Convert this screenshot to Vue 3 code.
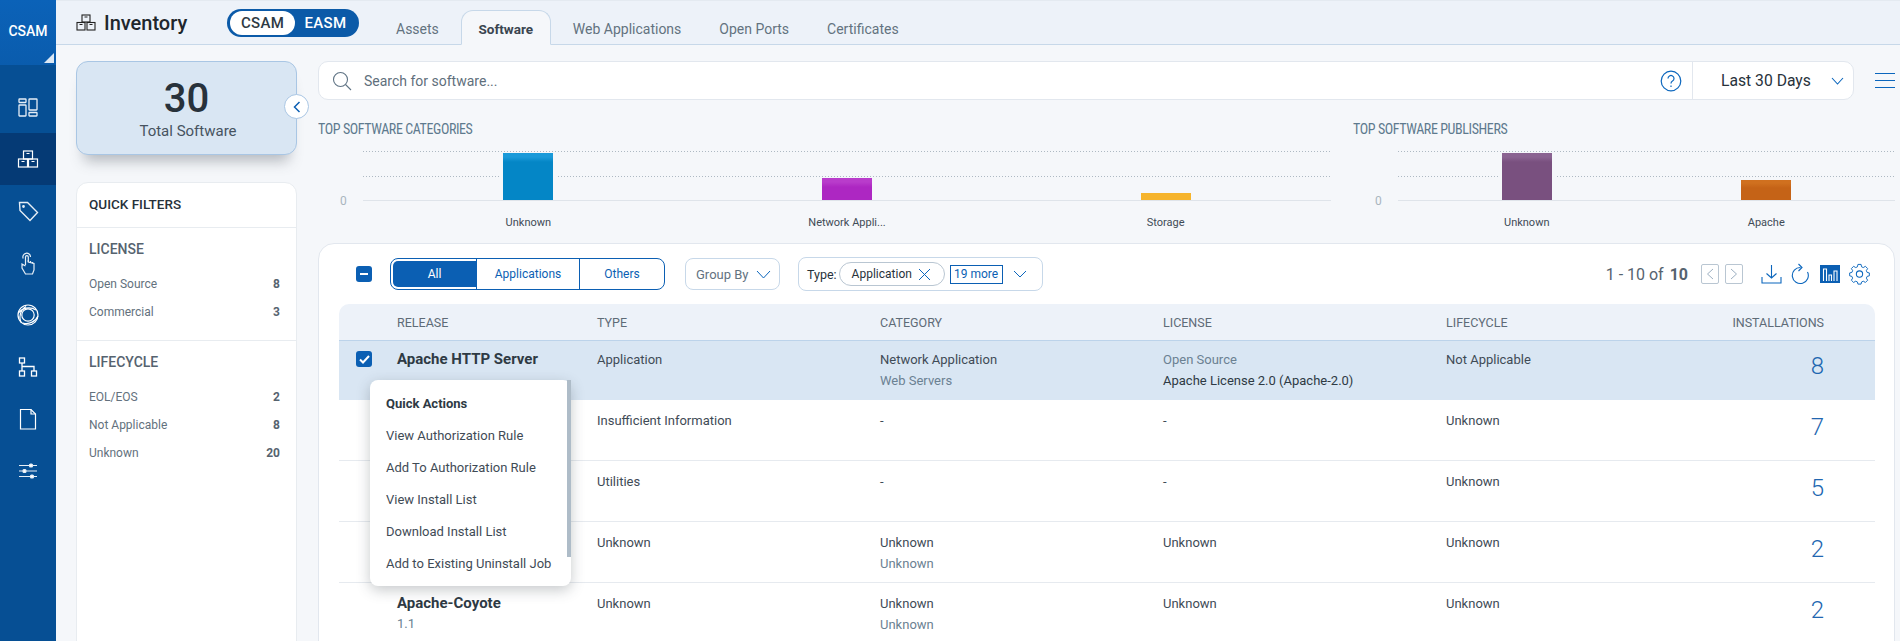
<template>
  <div class="app">
    <!-- left nav -->
    <aside class="sidebar">
      <div class="logo">CSAM<span class="logo-corner"></span></div>
      <nav class="nav">
        <div class="nav-item">
          <svg width="20" height="19" viewBox="0 0 20 19" fill="none" stroke="#e6eef6" stroke-width="1.3">
            <rect x="1" y="1" width="7" height="3.5" rx=".5" /><rect x="1" y="7" width="7" height="11" rx=".5" />
            <rect x="11" y="1" width="8" height="11" rx=".5" /><rect x="11" y="14.5" width="8" height="3.5" rx=".5" />
          </svg>
        </div>
        <div class="nav-item active">
          <svg width="22" height="18" viewBox="0 0 22 18" fill="none" stroke="#fff" stroke-width="1.2">
            <rect x="6.5" y="1" width="9" height="8" /><rect x="1.5" y="9" width="9" height="8" /><rect x="11.5" y="9" width="9" height="8" />
            <path d="M9.5 3.5h3M4.5 11.5h3M14.5 11.5h3" />
          </svg>
        </div>
        <div class="nav-item">
          <svg width="21" height="21" viewBox="0 0 21 21" fill="none" stroke="#e6eef6" stroke-width="1.4">
            <path d="M1.5 1.5h8l10 10-7.5 8-10-10z" /><circle cx="5.5" cy="5.5" r=".7" />
          </svg>
        </div>
        <div class="nav-item">
          <svg width="14" height="23" viewBox="0 0 14 23" fill="none" stroke="#e6eef6" stroke-width="1.2">
            <path d="M4.5 13V5a1.4 1.4 0 0 1 2.8 0v5l5.700 1.500V18l-1.500 4H4.500L1 16v-4l3.500 2" />
            <path d="M7.300 10V8M9.500 11V9M11.500 11.500V10" />
            <path d="M2.200 6.500A3.800 3.800 0 1 1 9.500 5" />
          </svg>
        </div>
        <div class="nav-item">
          <svg width="22" height="22" viewBox="0 0 22 22" fill="none" stroke="#fff" stroke-width="1.2">
            <circle cx="11" cy="11" r="10" /><circle cx="11" cy="11" r="6.2" />
            <path d="M1.500 9C5 4 13 2 19 6M4.500 19C1.500 14 3 6 9 2.500M21 12c-2 5-9 9-15 7" />
          </svg>
        </div>
        <div class="nav-item">
          <svg width="20" height="20" viewBox="0 0 20 20" fill="none" stroke="#fff" stroke-width="1.3">
            <rect x="1.5" y="1" width="5" height="5" /><rect x="1.5" y="14" width="5" height="5" /><rect x="13.5" y="14" width="5" height="5" />
            <path d="M4 6v8M4 9.500h12V14" />
          </svg>
        </div>
        <div class="nav-item">
          <svg width="18" height="22" viewBox="0 0 18 22" fill="none" stroke="#fff" stroke-width="1.2">
            <path d="M1.500 1.500h10.500l4.500 4.500v15H1.500z" /><path d="M12 1.500V6h4.500" />
          </svg>
        </div>
        <div class="nav-item">
          <svg width="20" height="16" viewBox="0 0 20 16" fill="none" stroke="#e6eef6" stroke-width="1.1">
            <path d="M1 2.500h18M1 8h18M1 13.500h18" />
            <rect x="11.5" y="1" width="3" height="3" rx="1" fill="#fff" /><rect x="5" y="6.5" width="3" height="3" rx="1" fill="#fff" /><rect x="12.5" y="12" width="3" height="3" rx="1" fill="#fff" />
          </svg>
        </div>
      </nav>
    </aside>

    <div class="main">
      <header class="topbar">
        <div class="page-title">
          <svg width="20" height="17" viewBox="0 0 20 17" fill="none" stroke="#222" stroke-width="1.1">
            <rect x="6" y="1" width="8" height="7" /><rect x="1" y="8.5" width="8" height="7.5" /><rect x="11" y="8.5" width="8" height="7.5" />
            <path d="M8.500 3h3M3.500 10.500h3M13.500 10.500h3" />
          </svg>
          <span>Inventory</span>
        </div>
        <div class="scope-toggle">
          <span class="scope on">CSAM</span>
          <span class="scope">EASM</span>
        </div>
        <div class="tabs">
          <div v-for="tab in tabs" :key="tab" class="tab" :class="{ selected: tab === 'Software' }">{{ tab }}</div>
        </div>
      </header>

      <div class="content">
        <!-- left column -->
        <div class="left-col">
          <div class="total-card">
            <div class="total-num">30</div>
            <div class="total-label">Total Software</div>
            <button class="collapse-btn">
              <svg width="8" height="12" viewBox="0 0 8 12" fill="none" stroke="#0b5fb3" stroke-width="1.5"><path d="M6.500 1L1.500 6l5 5" /></svg>
            </button>
          </div>
          <div class="filters">
            <div class="filters-title">QUICK FILTERS</div>
            <div v-for="group in filterGroups" :key="group.name" class="filter-group">
              <div class="filter-name">{{ group.name }}</div>
              <div v-for="item in group.items" :key="item.label" class="filter-row">
                <span>{{ item.label }}</span><b>{{ item.count }}</b>
              </div>
            </div>
          </div>
        </div>

        <!-- right column -->
        <div class="right-col">
          <div class="search-row">
            <div class="search-box">
              <svg class="search-icon" width="20" height="20" viewBox="0 0 20 20" fill="none" stroke="#5f7384" stroke-width="1.1">
                <circle cx="8.5" cy="8.5" r="7" /><path d="M13.500 13.500l5.500 5.500" />
              </svg>
              <span class="search-text">Search for software...</span>
              <svg class="help-icon" width="22" height="22" viewBox="0 0 22 22" fill="none" stroke="#0b66bd" stroke-width="1.2">
                <circle cx="11" cy="11" r="9.8" />
                <path d="M8 8.500a3 3 0 1 1 4.500 2.600c-1 .6-1.500 1.100-1.500 2.400" /><path d="M11 15.500v1.500" />
              </svg>
              <div class="range">
                <span>Last 30 Days</span>
                <svg width="13" height="8" viewBox="0 0 13 8" fill="none" stroke="#0b66bd" stroke-width="1.1"><path d="M1 1l5.500 6L12 1" /></svg>
              </div>
            </div>
            <div class="hamburger"><i></i><i></i><i></i></div>
          </div>

          <div class="charts">
            <div v-for="chart in charts" :key="chart.title" class="chart" :class="chart.cls">
              <div class="chart-title">{{ chart.title }}</div>
              <div class="chart-body">
                <span class="zero">0</span>
                <div class="plot-wrap">
                  <div class="plot">
                    <div v-for="bar in chart.bars" :key="bar.label" class="bar-slot">
                      <div class="bar" :style="{ height: bar.h + 'px', background: bar.color }"></div>
                    </div>
                  </div>
                  <div class="bar-labels">
                    <span v-for="bar in chart.bars" :key="bar.label">{{ bar.label }}</span>
                  </div>
                </div>
              </div>
            </div>
          </div>

          <section class="panel">
            <div class="toolbar">
              <span class="check minus"><i></i></span>
              <div class="segment">
                <span class="seg on">All</span>
                <span class="seg apps">Applications</span>
                <span class="seg others">Others</span>
              </div>
              <div class="group-by">
                <span>Group By</span>
                <svg width="15" height="9" viewBox="0 0 15 9" fill="none" stroke="#0b66bd" stroke-width="1"><path d="M1 1l6.500 7L14 1" /></svg>
              </div>
              <div class="type-filter">
                <span class="type-label">Type:</span>
                <span class="chip">Application
                  <svg width="13" height="13" viewBox="0 0 13 13" fill="none" stroke="#0b66bd" stroke-width="1"><path d="M1 1l11 11M12 1L1 12" /></svg>
                </span>
                <span class="more">19 more</span>
                <svg class="type-caret" width="14" height="8" viewBox="0 0 14 8" fill="none" stroke="#0b66bd" stroke-width="1"><path d="M1 1l6 6 6-6" /></svg>
              </div>
              <div class="pager">
                <span class="count">1 - 10 of <b>10</b></span>
                <span class="page-btn"><svg width="8" height="12" viewBox="0 0 8 12" fill="none" stroke="#9db0c2" stroke-width="1"><path d="M7 1L1.500 6 7 11" /></svg></span>
                <span class="page-btn"><svg width="8" height="12" viewBox="0 0 8 12" fill="none" stroke="#9db0c2" stroke-width="1"><path d="M1 1l5.500 5L1 11" /></svg></span>
                <svg class="tool first" width="21" height="20" viewBox="0 0 21 20" fill="none" stroke="#0b66bd" stroke-width="1.1">
                  <path d="M10.500 1v13M5.500 9.500l5 4.500 5-4.500M1 13v6h19v-6" />
                </svg>
                <svg class="tool" width="18" height="22" viewBox="0 0 18 22" fill="none" stroke="#0b66bd" stroke-width="1.1">
                  <path d="M9.500 4.500A8 8 0 1 0 16.500 9" /><path d="M7.500 1l3.500 3.500L7.500 8" />
                </svg>
                <span class="chart-toggle">
                  <svg width="16" height="14" viewBox="0 0 16 14" fill="none" stroke="#fff" stroke-width="1.1"><path d="M1.500 14V2h3v12M7 14V8h2.500v6M12 14V4h3v10" /></svg>
                </span>
                <svg class="tool" width="21" height="22" viewBox="0 0 24 24" fill="none" stroke="#0b66bd" stroke-width="1.2">
                  <circle cx="12" cy="12" r="3.6" />
                  <path d="M10 1.500h4l.6 3 2.200 1 2.700-1.600 2.800 2.900-1.600 2.600 1 2.300 2.800.6v3.700l-2.800.7-1 2.200 1.600 2.700-2.800 2.800-2.700-1.600-2.200 1-.6 2.700h-4l-.6-2.700-2.200-1-2.700 1.600-2.800-2.800 1.600-2.700-1-2.200-2.800-.7v-3.700l2.800-.6 1-2.300-1.600-2.600 2.800-2.900 2.700 1.600 2.200-1z" transform="translate(1.200 -.3) scale(.9)" />
                </svg>
              </div>
            </div>

            <div class="grid">
              <div class="grid-head">
                <span></span><span>RELEASE</span><span>TYPE</span><span>CATEGORY</span><span>LICENSE</span><span>LIFECYCLE</span>
                <span class="num-head">INSTALLATIONS</span>
              </div>
              <div v-for="(row, i) in rows" :key="i" class="grid-row" :class="{ picked: i === 0 }">
                <div><span v-if="i === 0" class="check">
                  <svg width="11" height="9" viewBox="0 0 11 9" fill="none" stroke="#fff" stroke-width="2"><path d="M1 4.500L4 7.500 10 1" /></svg>
                </span></div>
                <div>
                  <div class="release">{{ row.release }}</div>
                  <div class="sub">{{ row.version }}</div>
                </div>
                <div>{{ row.type }}</div>
                <div>
                  <div>{{ row.category }}</div>
                  <div class="sub">{{ row.subCategory }}</div>
                </div>
                <div>
                  <div :class="{ muted: row.licenseName }">{{ row.license }}</div>
                  <div class="second">{{ row.licenseName }}</div>
                </div>
                <div>{{ row.lifecycle }}</div>
                <div class="installs">{{ row.installs }}</div>
              </div>
            </div>

            <!-- row actions popup -->
            <div class="quick-menu">
              <div class="menu-title">Quick Actions</div>
              <div v-for="action in actions" :key="action" class="menu-item">{{ action }}</div>
              <div class="menu-scroll"></div>
            </div>
          </section>
        </div>
      </div>
    </div>
  </div>
</template>

<script setup>
const tabs = ['Assets', 'Software', 'Web Applications', 'Open Ports', 'Certificates']

const filterGroups = [
  {
    name: 'LICENSE',
    items: [
      { label: 'Open Source', count: 8 },
      { label: 'Commercial', count: 3 },
    ],
  },
  {
    name: 'LIFECYCLE',
    items: [
      { label: 'EOL/EOS', count: 2 },
      { label: 'Not Applicable', count: 8 },
      { label: 'Unknown', count: 20 },
    ],
  },
]

const charts = [
  {
    title: 'TOP SOFTWARE CATEGORIES',
    cls: 'categories',
    bars: [
      { label: 'Unknown', h: 47, color: 'linear-gradient(#1a9ad9 0 4px, #0486c6 9px)' },
      { label: 'Network Appli...', h: 22, color: 'linear-gradient(#b93ccb 0 4px, #ad27c2 9px)' },
      { label: 'Storage', h: 7, color: '#f6b42c' },
    ],
  },
  {
    title: 'TOP SOFTWARE PUBLISHERS',
    cls: 'publishers',
    bars: [
      { label: 'Unknown', h: 47, color: 'linear-gradient(#8a6391 0 4px, #79507f 9px)' },
      { label: 'Apache', h: 20, color: 'linear-gradient(#d0701f 0 3px, #c56317 8px)' },
    ],
  },
]

const rows = [
  { release: 'Apache HTTP Server', type: 'Application', category: 'Network Application', subCategory: 'Web Servers', license: 'Open Source', licenseName: 'Apache License 2.0 (Apache-2.0)', lifecycle: 'Not Applicable', installs: 8 },
  { type: 'Insufficient Information', category: '-', license: '-', lifecycle: 'Unknown', installs: 7 },
  { type: 'Utilities', category: '-', license: '-', lifecycle: 'Unknown', installs: 5 },
  { type: 'Unknown', category: 'Unknown', subCategory: 'Unknown', license: 'Unknown', lifecycle: 'Unknown', installs: 2 },
  { release: 'Apache-Coyote', version: '1.1', type: 'Unknown', category: 'Unknown', subCategory: 'Unknown', license: 'Unknown', lifecycle: 'Unknown', installs: 2 },
]

const actions = [
  'View Authorization Rule',
  'Add To Authorization Rule',
  'View Install List',
  'Download Install List',
  'Add to Existing Uninstall Job',
]
</script>

<style>
html,
body {
  margin: 0;
  overflow: hidden;
}
</style>

<style scoped>
.app {
  display: flex;
  width: 1900px;
  height: 641px;
  overflow: hidden;
  background: #f5f7fa;
  font-family: Roboto, 'Liberation Sans', sans-serif;
  color: #2e3a44;
}

/* ===== sidebar ===== */
.sidebar {
  width: 56px;
  flex-shrink: 0;
  background: #064f94;
}
.logo {
  position: relative;
  height: 65px;
  padding-top: 23px;
  box-sizing: border-box;
  text-align: center;
  color: #fff;
  font-size: 14px;
  font-weight: 500;
  background: linear-gradient(#0b62b8, #0a5cad);
}
.logo-corner {
  position: absolute;
  right: 2px;
  bottom: 2px;
  border-left: 10px solid transparent;
  border-bottom: 10px solid #dce8f4;
}
.nav {
  padding-top: 16px;
}
.nav-item {
  height: 52px;
  display: flex;
  align-items: center;
  justify-content: center;
}
.nav-item.active {
  background: #053a75;
}

/* ===== header ===== */
.main {
  flex: 1;
  min-width: 0;
}
.topbar {
  height: 45px;
  box-sizing: border-box;
  display: flex;
  align-items: flex-end;
  padding-left: 20px;
  background: #edf2f9;
  border-top: 1px solid #e4eaf1;
  border-bottom: 1px solid #c7d8e9;
}
.page-title {
  align-self: center;
  display: flex;
  align-items: center;
  gap: 8px;
  width: 151px;
  font-size: 20px;
  font-weight: 500;
  color: #20262c;
}
.scope-toggle {
  align-self: center;
  display: flex;
  align-items: center;
  width: 132px;
  height: 28px;
  box-sizing: border-box;
  padding: 2px 3px;
  border-radius: 14px;
  background: #0b5aa8;
  font-size: 15px;
  font-weight: 500;
  color: #fff;
}
.scope {
  flex: 1;
  text-align: center;
  letter-spacing: 0.3px;
}
.scope.on {
  flex: 0 0 65px;
  line-height: 24px;
  border-radius: 12px;
  background: #fff;
  color: #2e3a44;
}
.tabs {
  display: flex;
  margin-left: 21px;
  margin-bottom: -1px;
}
.tab {
  height: 35px;
  box-sizing: border-box;
  padding: 10px 15px 0;
  margin-right: 6px;
  font-size: 14px;
  color: #63727f;
  border: 1px solid transparent;
}
.tab.selected {
  width: 90px;
  padding: 10px 0 0;
  text-align: center;
  background: #f5f7fa;
  border-color: #c7d8e9;
  border-bottom-color: #f5f7fa;
  border-radius: 12px 12px 0 0;
  font-size: 13.5px;
  font-weight: 700;
  color: #3a4550;
}

/* ===== left column ===== */
.content {
  display: flex;
  padding: 16px 0 0 20px;
  gap: 21px;
}
.left-col {
  width: 221px;
  flex-shrink: 0;
}
.total-card {
  position: relative;
  height: 94px;
  box-sizing: border-box;
  padding-top: 16px;
  text-align: center;
  background: #d9e6f3;
  border: 1px solid #a9c6e4;
  border-radius: 12px;
  box-shadow: 0 14px 14px -8px rgba(60, 70, 80, 0.35);
}
.total-num {
  font-size: 40px;
  font-weight: 500;
  line-height: 42px;
  color: #28323b;
}
.total-label {
  margin-top: 2px;
  margin-left: 3px;
  font-size: 15px;
  color: #46535f;
}
.collapse-btn {
  position: absolute;
  top: 32px;
  right: -13px;
  width: 25px;
  height: 25px;
  padding: 0;
  display: flex;
  align-items: center;
  justify-content: center;
  background: #fff;
  border: 1px solid #a9c6e4;
  border-radius: 50%;
}
.filters {
  margin-top: 27px;
  height: 470px;
  background: #fff;
  border: 1px solid #e8ecf0;
  border-radius: 12px 12px 0 0;
}
.filters-title {
  padding: 13px 12px 0;
  height: 44px;
  box-sizing: border-box;
  font-size: 13.5px;
  font-weight: 500;
  color: #27313a;
}
.filter-group {
  height: 113px;
  box-sizing: border-box;
  padding: 13px 16px 0 12px;
  border-top: 1px solid #e8ecf0;
}
.filter-name {
  font-size: 14px;
  font-weight: 500;
  color: #56636f;
  margin-bottom: 19px;
}
.filter-row {
  display: flex;
  justify-content: space-between;
  height: 28px;
  line-height: 16px;
  font-size: 12px;
  color: #63717d;
}
.filter-row b {
  font-weight: 700;
  color: #56636f;
}

/* ===== search ===== */
.right-col {
  flex: 1;
  min-width: 0;
}
.search-row {
  display: flex;
  align-items: center;
}
.search-box {
  width: 1536px;
  height: 39px;
  box-sizing: border-box;
  display: flex;
  align-items: center;
  padding-left: 13px;
  background: #fff;
  border: 1px solid #e2e7ee;
  border-radius: 10px;
}
.search-text {
  margin-left: 12px;
  flex: 1;
  font-size: 14px;
  color: #5f6f7c;
}
.help-icon {
  margin-right: 10px;
}
.range {
  width: 161px;
  height: 100%;
  box-sizing: border-box;
  display: flex;
  align-items: center;
  justify-content: space-between;
  padding: 0 9px 0 28px;
  border-left: 1px solid #e2e7ee;
  font-size: 15.7px;
  color: #28323b;
}
.hamburger {
  margin-left: 21px;
  width: 20px;
}
.hamburger i {
  display: block;
  height: 1px;
  background: #0b66bd;
  margin: 6px 0;
}

/* ===== charts ===== */
.charts {
  display: flex;
  height: 143px;
  overflow: hidden;
}
.chart {
  padding-top: 21px;
}
.chart.categories {
  width: 1035px;
}
.chart.publishers {
  width: 542px;
}
.chart-title {
  font-family: 'Liberation Sans Narrow', 'Roboto Condensed', Roboto, sans-serif;
  font-size: 14px;
  letter-spacing: -0.4px;
  line-height: 16px;
  color: #5e7a8e;
}
.chart-body {
  display: flex;
  margin-top: 14px;
}
.zero {
  width: 45px;
  box-sizing: border-box;
  padding: 43px 0 0 22px;
  font-size: 12px;
  color: #a9b5be;
}
.plot-wrap {
  flex: 1;
}
.plot {
  display: flex;
  height: 50px;
  box-sizing: border-box;
  border-bottom: 1px solid #dfe4ea;
  background-image:
    repeating-linear-gradient(90deg, #aeb9c3 0 1px, transparent 1px 3px),
    repeating-linear-gradient(90deg, #aeb9c3 0 1px, transparent 1px 3px);
  background-size: 100% 1px;
  background-repeat: no-repeat;
  background-position: 0 0, 0 25px;
}
.chart.categories .plot-wrap {
  margin-right: 22px;
}
.chart.categories .plot,
.chart.categories .bar-labels {
  padding: 0 6px;
}
.chart.publishers .plot,
.chart.publishers .bar-labels {
  padding: 0 9px;
}
.bar-slot {
  flex: 1;
  display: flex;
  justify-content: center;
  align-items: flex-end;
}
.bar {
  width: 50px;
  box-shadow: -3px 0 0 #f5f7fa, 3px 0 0 #f5f7fa;
}
.bar-labels {
  display: flex;
  height: 13px;
  margin-top: 14px;
  overflow: hidden;
  font-size: 11px;
  line-height: 15px;
  color: #3f4b56;
}
.bar-labels span {
  flex: 1;
  text-align: center;
}

/* ===== table panel ===== */
.panel {
  position: relative;
  width: 1577px;
  height: 400px;
  box-sizing: border-box;
  background: #fff;
  border: 1px solid #e2e7ee;
  border-radius: 16px 16px 0 0;
}
.toolbar {
  height: 60px;
  display: flex;
  align-items: center;
  padding-left: 37px;
}
.check {
  width: 16px;
  height: 16px;
  display: flex;
  align-items: center;
  justify-content: center;
  background: #0b5fb3;
  border-radius: 3px;
}
.check.minus i {
  width: 8px;
  height: 2px;
  background: #fff;
}
.segment {
  margin-left: 18px;
  display: flex;
  width: 275px;
  height: 32px;
  box-sizing: border-box;
  border: 1px solid #0b5fb3;
  border-radius: 8px;
  font-size: 12px;
  color: #0b5fb3;
}
.seg {
  line-height: 30px;
  text-align: center;
}
.seg.on {
  width: 83px;
  margin: 2px 0 2px 2px;
  line-height: 26px;
  background: #0b5fb3;
  color: #fff;
  border-radius: 5px 0 0 5px;
  box-shadow: 2px 0 0 #fff;
}
.seg.apps {
  width: 103px;
  border-left: 1px solid #0b5fb3;
  box-sizing: border-box;
}
.seg.others {
  flex: 1;
  border-left: 1px solid #0b5fb3;
}
.group-by {
  margin-left: 20px;
  width: 95px;
  height: 32px;
  box-sizing: border-box;
  display: flex;
  align-items: center;
  justify-content: space-between;
  padding: 0 8px 0 10px;
  background: #fff;
  border: 1px solid #c7d8e9;
  border-radius: 8px;
  font-size: 13px;
  color: #63727f;
}
.type-filter {
  margin-left: 18px;
  width: 245px;
  height: 34px;
  box-sizing: border-box;
  display: flex;
  align-items: center;
  padding-left: 8px;
  border: 1px solid #c7d8e9;
  border-radius: 8px;
  font-size: 12.5px;
  color: #28323b;
}
.chip {
  margin-left: 2px;
  width: 106px;
  height: 24px;
  box-sizing: border-box;
  display: flex;
  align-items: center;
  justify-content: space-between;
  padding: 0 13px 0 12px;
  border: 1px solid #b9c6d2;
  border-radius: 12px;
  font-size: 12px;
}
.more {
  margin-left: 5px;
  width: 53px;
  line-height: 17px;
  text-align: center;
  box-sizing: border-box;
  border: 1px solid #0b5fb3;
  color: #0b5fb3;
  font-size: 12px;
}
.type-caret {
  margin-left: 10px;
}
.pager {
  margin-left: auto;
  display: flex;
  align-items: center;
  padding-right: 24px;
}
.count {
  font-size: 16px;
  color: #56636f;
  margin-right: 13px;
}
.count b {
  margin-left: 2px;
  font-weight: 700;
}
.page-btn {
  width: 18px;
  height: 20px;
  margin-right: 6px;
  box-sizing: border-box;
  display: flex;
  align-items: center;
  justify-content: center;
  border: 1px solid #b9c6d2;
  border-radius: 2px;
}
.tool {
  margin-left: 9px;
}
.tool.first {
  margin-left: 12px;
}
.chart-toggle {
  margin-left: 11px;
  width: 20px;
  height: 18px;
  display: flex;
  align-items: center;
  justify-content: center;
  background: #0b5fb3;
}

/* ===== table ===== */
.grid {
  width: 1536px;
  margin-left: 20px;
}
.grid-head,
.grid-row {
  display: grid;
  grid-template-columns: 58px 200px 283px 283px 283px 180px 249px;
}
.grid-head {
  height: 37px;
  align-items: center;
  background: #edf2f9;
  border-bottom: 1px solid #bcd3ea;
  border-radius: 10px 10px 0 0;
  box-sizing: border-box;
  font-size: 12.5px;
  color: #5e6b77;
}
.num-head {
  text-align: right;
  padding-right: 51px;
}
.grid-row {
  height: 61px;
  box-sizing: border-box;
  padding-top: 12px;
  border-bottom: 1px solid #e6eaef;
  font-size: 13px;
  line-height: 18px;
  color: #3f4b56;
}
.grid-row.picked {
  height: 59px;
  padding-top: 10px;
  background: #d9e6f3;
  border-bottom: none;
}
.grid-row .check {
  margin-left: 17px;
}
.release {
  margin-top: -1px;
  font-size: 15px;
  font-weight: 700;
  color: #2e3a44;
}
.sub {
  margin-top: 3px;
  color: #6b8192;
}
.muted {
  color: #6b8192;
}
.second {
  margin-top: 3px;
  color: #2e3a44;
}
.installs {
  grid-column: 7;
  text-align: right;
  padding-right: 51px;
  margin-top: 3px;
  font-size: 24px;
  font-weight: 300;
  line-height: 24px;
  color: #2166b0;
}

/* ===== quick actions ===== */
.quick-menu {
  position: absolute;
  left: 51px;
  top: 136px;
  width: 201px;
  height: 206px;
  box-sizing: border-box;
  padding: 15px 16px;
  background: #fff;
  border-radius: 8px;
  box-shadow: 0 4px 14px rgba(50, 60, 70, 0.28);
  font-size: 13px;
  color: #3f4b56;
}
.menu-title {
  height: 32px;
  line-height: 18px;
  font-weight: 700;
  color: #2e3a44;
}
.menu-item {
  height: 32px;
  line-height: 18px;
}
.menu-scroll {
  position: absolute;
  top: 0;
  right: 0;
  width: 4px;
  height: 177px;
  background: #aebcc8;
}
</style>
